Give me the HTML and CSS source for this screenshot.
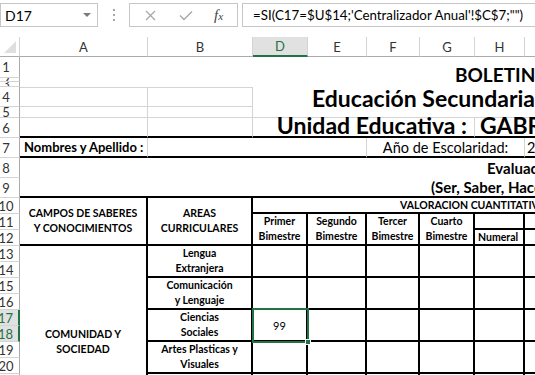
FILE: index.html
```html
<!DOCTYPE html>
<html lang="es">
<head>
    <meta charset="UTF-8">
    <meta name="viewport" content="width=device-width, initial-scale=1.0">
    <title>Boletin</title>
    <link rel="stylesheet" href="styles.css">
</head>
<body>
    <div class="formula-bar">
        <div class="name-box"><span>D17</span><i class="caret"></i></div>
        <div class="grip"><i></i><i></i><i></i></div>
        <div class="fx-buttons">
            <svg class="btn-x" width="11" height="11" viewBox="0 0 11 11"><path d="M1 1L10 10M10 1L1 10" stroke="#a8a8a8" stroke-width="1.3" fill="none"/></svg>
            <svg class="btn-ok" width="14" height="11" viewBox="0 0 14 11"><path d="M1 5.5L5 9.5L13 1.5" stroke="#a8a8a8" stroke-width="1.4" fill="none"/></svg>
            <span class="fx">f<small>x</small></span>
        </div>
        <div class="formula">=SI(C17=$U$14;'Centralizador Anual'!$C$7;"")</div>
    </div>

    <div class="sheet">
        <div class="corner"><i></i></div>
        <div class="ch">A</div>
        <div class="ch">B</div>
        <div class="ch ch-sel">D</div>
        <div class="ch">E</div>
        <div class="ch">F</div>
        <div class="ch">G</div>
        <div class="ch">H</div>
        <div class="ch">I</div>

        <div class="rh">1</div>
        <div class="cell span8 rs3 title-boletin">BOLETIN</div>
        <div class="rh">2</div>
        <div class="rh">3</div>

        <div class="rh">4</div>
        <div class="cell g g-top"></div>
        <div class="cell g g-top"></div>
        <div class="cell span6 rs2 g-bottom title-edu">Educación Secundaria</div>
        <div class="rh">5</div>
        <div class="cell g"></div>
        <div class="cell g"></div>
        <div class="rh">6</div>
        <div class="cell g bb"></div>
        <div class="cell g bb"></div>
        <div class="cell span4 g bb title-unidad">Unidad Educativa :</div>
        <div class="cell span2 bb title-school">GABRIEL</div>

        <div class="rh">7</div>
        <div class="cell gr bb field-label">Nombres y Apellido :</div>
        <div class="cell span3 gr bb"></div>
        <div class="cell span3 gr bb field-year">Año de Escolaridad:</div>
        <div class="cell bb field-value">2</div>

        <div class="rh">8</div>
        <div class="cell span8 eval">Evaluación</div>
        <div class="rh">9</div>
        <div class="cell span8 bb eval eval-sub">(Ser, Saber, Hacer</div>

        <div class="rh">10</div>
        <div class="cell t rs3 head">CAMPOS DE SABERES<br>Y CONOCIMIENTOS</div>
        <div class="cell t rs3 head">AREAS<br>CURRICULARES</div>
        <div class="cell t span6 head valor">VALORACION CUANTITATIVA</div>
        <div class="rh">11</div>
        <div class="cell t rs2 head">Primer<br>Bimestre</div>
        <div class="cell t rs2 head">Segundo<br>Bimestre</div>
        <div class="cell t rs2 head">Tercer<br>Bimestre</div>
        <div class="cell t rs2 head">Cuarto<br>Bimestre</div>
        <div class="cell t"></div>
        <div class="cell t"></div>
        <div class="rh">12</div>
        <div class="cell t head numeral">Numeral</div>
        <div class="cell t"></div>

        <div class="rh">13</div>
        <div class="cell rs9 campo">COMUNIDAD Y<br>SOCIEDAD</div>
        <div class="cell t rs2 head">Lengua<br>Extranjera</div>
        <div class="cell t rs2"></div>
        <div class="cell t rs2"></div>
        <div class="cell t rs2"></div>
        <div class="cell t rs2"></div>
        <div class="cell t rs2"></div>
        <div class="cell t rs2"></div>
        <div class="rh">14</div>

        <div class="rh">15</div>
        <div class="cell t rs2 head">Comunicación<br>y Lenguaje</div>
        <div class="cell t rs2"></div>
        <div class="cell t rs2"></div>
        <div class="cell t rs2"></div>
        <div class="cell t rs2"></div>
        <div class="cell t rs2"></div>
        <div class="cell t rs2"></div>
        <div class="rh">16</div>

        <div class="rh rh-sel">17</div>
        <div class="cell t rs2 head">Ciencias<br>Sociales</div>
        <div class="cell t rs2 grade selected">99<i class="fill-handle"></i></div>
        <div class="cell t rs2"></div>
        <div class="cell t rs2"></div>
        <div class="cell t rs2"></div>
        <div class="cell t rs2"></div>
        <div class="cell t rs2"></div>
        <div class="rh rh-sel">18</div>

        <div class="rh">19</div>
        <div class="cell t rs2 head">Artes Plasticas y<br>Visuales</div>
        <div class="cell t rs2"></div>
        <div class="cell t rs2"></div>
        <div class="cell t rs2"></div>
        <div class="cell t rs2"></div>
        <div class="cell t rs2"></div>
        <div class="cell t rs2"></div>
        <div class="rh">20</div>

        <div class="rh">21</div>
        <div class="cell t rs2"></div>
        <div class="cell t rs2"></div>
        <div class="cell t rs2"></div>
        <div class="cell t rs2"></div>
        <div class="cell t rs2"></div>
        <div class="cell t rs2"></div>
        <div class="cell t rs2"></div>
    </div>
</body>
</html>
```

FILE: styles.css
```css
* {
    box-sizing: border-box;
    margin: 0;
    padding: 0;
}
body {
    width: 535px;
    height: 375px;
    overflow: hidden;
    background: #fff;
    color: #000;
    font-family: Lato, "Liberation Sans", sans-serif;
}

/* formula bar */
.formula-bar {
    height: 37px;
    display: flex;
    align-items: flex-start;
    padding-top: 3px;
}
.name-box {
    flex: none;
    width: 98px;
    height: 24px;
    border: 1px solid #c6c6c6;
    display: flex;
    align-items: center;
    justify-content: space-between;
    padding: 0 6px 0 4px;
    font-size: 14px;
}
.caret {
    width: 0;
    height: 0;
    border-left: 4px solid transparent;
    border-right: 4px solid transparent;
    border-top: 4px solid #7b7b7b;
}
.grip {
    flex: none;
    width: 31px;
    height: 24px;
    display: flex;
    flex-direction: column;
    align-items: center;
    justify-content: center;
    gap: 3px;
}
.grip i {
    width: 2px;
    height: 2px;
    background: #a6a6a6;
}
.fx-buttons {
    flex: none;
    width: 109px;
    height: 24px;
    border: 1px solid #c6c6c6;
    display: flex;
    align-items: center;
    padding-left: 15px;
}
.btn-ok {
    margin-left: 23px;
}
.fx {
    margin-left: 21px;
    font-family: "Liberation Serif", serif;
    font-style: italic;
    font-size: 15px;
    color: #444;
}
.fx small {
    font-size: 11px;
}
.formula {
    flex: none;
    width: 320px;
    height: 24px;
    margin-left: 4px;
    border: 1px solid #c6c6c6;
    padding-left: 10px;
    font-size: 13.3px;
    line-height: 22px;
    white-space: nowrap;
}

/* sheet grid */
.sheet {
    display: grid;
    grid-template-columns: 20px 128px 105px 55px 59px 53px 55px 50px 60px;
    grid-template-rows: 20px 21px 4px 5px 20px 11px 20px 20px 20px 20px repeat(12, 16px);
    grid-auto-rows: 16px;
}
.corner {
    border-right: 1px solid #d4d4d4;
    border-bottom: 1px solid #ababab;
    display: flex;
    align-items: flex-end;
    justify-content: flex-end;
    padding: 0 3px 3px 0;
}
.corner i {
    width: 0;
    height: 0;
    border-left: 12px solid transparent;
    border-bottom: 12px solid #dfdfdf;
}
.ch {
    border-right: 1px solid #d4d4d4;
    border-bottom: 1px solid #ababab;
    font-size: 13px;
    color: #333;
    display: flex;
    align-items: center;
    justify-content: center;
}
.ch-sel {
    background: #e1e1e1;
    color: #217346;
    border-bottom: 2px solid #217346;
}
.rh {
    border-right: 1px solid #ababab;
    border-bottom: 1px solid #d4d4d4;
    font-size: 13px;
    color: #333;
    display: flex;
    align-items: center;
    justify-content: center;
    padding-right: 7px;
    overflow: hidden;
}
.rh-sel {
    background: #e1e1e1;
    color: #217346;
    border-right: 2px solid #217346;
}

.cell {
    display: flex;
    align-items: center;
    white-space: nowrap;
    overflow: hidden;
}
.span2 { grid-column: span 2; }
.span3 { grid-column: span 3; }
.span4 { grid-column: span 4; }
.span6 { grid-column: span 6; }
.span8 { grid-column: span 8; }
.rs2 { grid-row: span 2; }
.rs3 { grid-row: span 3; }
.rs9 { grid-row: span 9; }

.g {
    border-right: 1px solid #d4d4d4;
    border-bottom: 1px solid #d4d4d4;
}
.g-top {
    border-top: 1px solid #d4d4d4;
}
.g-bottom {
    border-bottom: 1px solid #d4d4d4;
}
.gr {
    border-right: 1px solid #d4d4d4;
}
.bb {
    border-bottom: 2px solid #000;
}
.t {
    border-right: 2px solid #000;
    border-bottom: 2px solid #000;
}

/* titles */
.title-boletin {
    padding: 4px 0 0 435px;
    font-size: 19px;
    font-weight: bold;
}
.title-edu {
    overflow: visible;
    align-items: flex-end;
    padding: 0 0 9px 59px;
    font-size: 23px;
    font-weight: bold;
    line-height: 20px;
}
.title-unidad {
    overflow: visible;
    justify-content: flex-end;
    align-items: flex-end;
    padding: 0 7px 1px 0;
    font-size: 23px;
    font-weight: bold;
    line-height: 20px;
}
.title-school {
    overflow: visible;
    align-items: flex-end;
    padding: 0 0 1px 5px;
    font-size: 23px;
    font-weight: bold;
    line-height: 20px;
}
.field-label {
    padding-left: 4px;
    font-size: 13px;
    font-weight: bold;
}
.field-year {
    justify-content: center;
    font-size: 14.5px;
}
.field-value {
    padding-left: 2px;
    font-size: 14.5px;
}
.eval {
    padding-left: 467px;
    font-size: 15px;
    font-weight: bold;
}
.eval-sub {
    padding-left: 411px;
}

/* table */
.head {
    justify-content: center;
    text-align: center;
    font-size: 10.5px;
    font-weight: bold;
    line-height: 15px;
}
.valor {
    justify-content: flex-start;
    padding-left: 147px;
}
.numeral {
    justify-content: flex-start;
    padding-left: 3px;
}
.campo {
    border-right: 2px solid #000;
    flex-direction: column;
    justify-content: flex-start;
    padding-top: 81px;
    text-align: center;
    font-size: 10.5px;
    font-weight: bold;
    line-height: 15px;
}
.grade {
    justify-content: center;
    font-size: 11px;
}
.selected {
    position: relative;
    overflow: visible;
}
.selected::before {
    content: "";
    position: absolute;
    left: -1px;
    top: -2px;
    right: -3px;
    bottom: -3px;
    border: 2px solid #217346;
}
.fill-handle {
    position: absolute;
    right: -5px;
    bottom: -5px;
    width: 6px;
    height: 6px;
    background: #217346;
    border: 1px solid #fff;
}
```
